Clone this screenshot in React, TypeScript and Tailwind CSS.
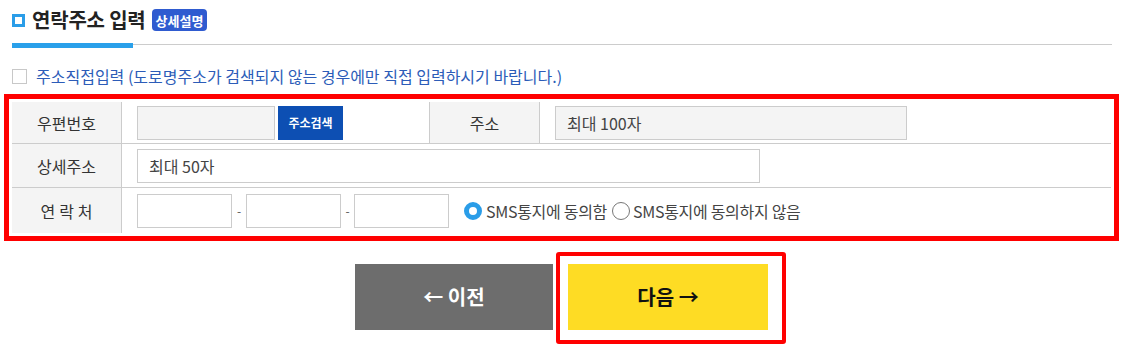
import React from "react";

const font = { fontFamily: '"Noto Sans CJK KR", "Noto Sans", sans-serif' };

function Label({ children, w = "w-[109px]" }: { children: React.ReactNode; w?: string }) {
  return (
    <div className={`${w} shrink-0 bg-[#f4f4f4] flex items-center justify-center text-[16px] text-[#333]`}>
      {children}
    </div>
  );
}

export default function App() {
  return (
    <div className="w-[1124px] h-[364px] bg-white relative overflow-hidden" style={font}>
      <div className="px-[12px] pt-[7px]">
        <div className="flex items-center h-[26px]">
          <div className="w-[13px] h-[13px] border-[3px] border-[#2a9de8] bg-white" />
          <div className="ml-[7px] text-[20px] font-bold text-[#222] leading-none tracking-[-0.2px]">연락주소 입력</div>
          <div className="ml-[6px] h-[22px] px-[4px] rounded-[4px] bg-[#2f5bd0] text-white text-[13px] font-bold flex items-center leading-none">상세설명</div>
        </div>
        <div className="flex items-center mt-[10px] h-[5px]">
          <div className="w-[121px] h-[5px] bg-[#2aa0ea]" />
          <div className="flex-1 h-px bg-[#cccccc] -mt-[2px]" />
        </div>
        <div className="flex items-center mt-[20px] h-[16px]">
          <div className="w-[15px] h-[15px] border border-[#c8c8c8] bg-white" />
          <div className="ml-[9px] text-[16px] text-[#2c5cb8] leading-none">주소직접입력 (도로명주소가 검색되지 않는 경우에만 직접 입력하시기 바랍니다.)</div>
        </div>
      </div>
      <div className="ml-[4px] mt-[10px] w-[1115px] border-[5px] border-[#ff0000] p-[3px]">
        <div className="flex flex-col">
          <div className="flex h-[42px] border-b border-[#cccccc]">
            <Label>우편번호</Label>
            <div className="w-px bg-[#cccccc]" />
            <div className="w-[307px] flex items-center pl-[15px]">
              <div className="w-[138px] h-[34px] border border-[#cccccc] bg-[#f4f4f4]" />
              <div className="ml-[3px] w-[65px] h-[34px] bg-[#0d4fb3] text-white text-[12px] font-bold flex items-center justify-center">주소검색</div>
            </div>
            <div className="w-px bg-[#cccccc]" />
            <Label>주소</Label>
            <div className="w-px bg-[#cccccc]" />
            <div className="flex-1 flex items-center pl-[15px]">
              <div className="w-[352px] h-[34px] border border-[#cccccc] bg-[#f4f4f4] flex items-center pl-[11px] text-[16px] text-[#444]">최대 100자</div>
            </div>
          </div>
          <div className="flex h-[44px] border-b border-[#cccccc]">
            <Label>상세주소</Label>
            <div className="w-px bg-[#cccccc]" />
            <div className="flex-1 flex items-center pl-[15px]">
              <div className="w-[623px] h-[34px] border border-[#cccccc] bg-white flex items-center pl-[11px] text-[16px] text-[#444]">최대 50자</div>
            </div>
          </div>
          <div className="flex h-[45px]">
            <Label><span className="tracking-[4px] pl-[4px]">연락처</span></Label>
            <div className="w-px bg-[#cccccc]" />
            <div className="flex-1 flex items-center pl-[15px] text-[16px] text-[#555]">
              <div className="w-[95px] h-[34px] border border-[#cccccc] bg-white" />
              <div className="w-[14px] text-center text-[12px]">-</div>
              <div className="w-[95px] h-[34px] border border-[#cccccc] bg-white" />
              <div className="w-[13px] text-center text-[12px]">-</div>
              <div className="w-[95px] h-[34px] border border-[#cccccc] bg-white" />
              <div className="ml-[15px] flex items-center">
                <div className="w-[18px] h-[18px] rounded-full border-[5px] border-[#2a9de8] bg-white" />
                <span className="ml-[4px] text-[#444] tracking-[-0.3px]">SMS통지에 동의함</span>
                <div className="ml-[5px] w-[18px] h-[18px] rounded-full border border-[#777] bg-white" />
                <span className="ml-[3px] text-[#444] tracking-[-0.3px]">SMS통지에 동의하지 않음</span>
              </div>
            </div>
          </div>
        </div>
      </div>
      <div className="flex mt-[11px] ml-[355px] items-start">
        <div className="mt-[12px] w-[198px] h-[66px] bg-[#6d6d6d] text-white text-[20px] font-bold flex items-center justify-center">← 이전</div>
        <div className="ml-[3px] w-[230px] h-[92px] border-[4px] border-[#ff0000] rounded-[3px] pl-[8px] pt-[8px]">
          <div className="w-[200px] h-[66px] bg-[#fedc24] text-[#111] text-[20px] font-bold flex items-center justify-center">다음 →</div>
        </div>
      </div>
    </div>
  );
}
